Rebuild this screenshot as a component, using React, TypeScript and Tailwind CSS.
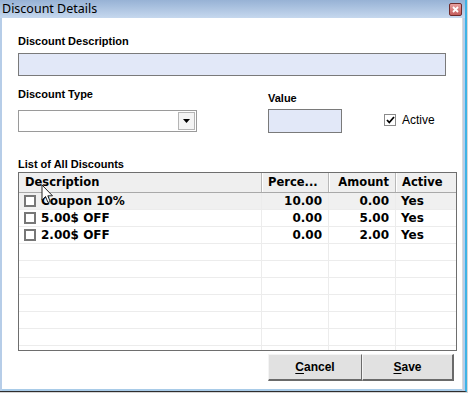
import { useState } from "react";

type DiscountRow = { desc: string; pct: string; amt: string; active: string };

const rows: DiscountRow[] = [
  { desc: "Coupon 10%", pct: "10.00", amt: "0.00", active: "Yes" },
  { desc: "5.00$ OFF", pct: "0.00", amt: "5.00", active: "Yes" },
  { desc: "2.00$ OFF", pct: "0.00", amt: "2.00", active: "Yes" },
];

const EMPTY_ROWS = 7;

const labelCls = "h-[13px] text-[11px] leading-[13px] font-bold text-black font-['Liberation_Sans',Arial,sans-serif]";
const gridFont = "font-['DejaVu_Sans',Verdana,sans-serif] font-bold text-black";

function Cursor() {
  return (
    <svg className="absolute left-[41px] top-[184px]" width="13" height="20" viewBox="0 0 13 20">
      <path d="M1 1 L1 16 L4.5 12.5 L7 18.5 L9.2 17.5 L6.8 11.8 L11.5 11.8 Z" fill="#ffffff" stroke="#222" strokeWidth="1" strokeLinejoin="round" />
    </svg>
  );
}

export default function App() {
  const [active, setActive] = useState(true);

  return (
    <div className="w-[468px] h-[393px] bg-[#d6d6d6] overflow-hidden relative">
      <div className="w-[467px] h-[392px] flex flex-col border-r-2 border-r-[#3db3e6] border-b border-b-[#2e2e2e] bg-[#b6cde8]">
        {/* title bar */}
        <div className="h-[18px] flex items-center justify-between bg-gradient-to-b from-[#97b2d5] to-[#c6d8ee] pl-[2px] pr-[4px]">
          <span className="text-[12.5px] leading-[16px] text-black font-['Noto_Sans','Open_Sans',sans-serif]">Discount Details</span>
          <button className="w-[13px] h-[13px] rounded-[2px] border border-[#6e2a2a] bg-gradient-to-b from-[#e8a0a0] to-[#c45c5c] flex items-center justify-center mr-[-1px]">
            <svg width="7" height="7" viewBox="0 0 7 7">
              <path d="M1 1 L6 6 M6 1 L1 6" stroke="#fff" strokeWidth="1.8" />
            </svg>
          </button>
        </div>

        {/* body */}
        <div className="flex-1 flex flex-col bg-white ml-[2px] mr-[2px] border-r border-r-[#d9d9d9] border-b-2 border-b-[#a8cbe8] pl-[16px] pt-[17px] relative">
          <div className={labelCls}>Discount Description</div>
          <input className="mt-[5px] w-[428px] h-[23px] bg-[#e2e8f8] border border-[#7a7a7a] outline-none" />

          <div className="flex mt-[12px]">
            <div className="w-[179px] flex flex-col">
              <div className={labelCls}>Discount Type</div>
              <div className="mt-[9px] h-[22px] flex border border-[#9a9a9a] bg-white">
                <div className="flex-1" />
                <div className="w-[17px] m-[1px] border border-[#b5b5b5] bg-[#f4f4f4] flex items-center justify-center">
                  <svg width="7" height="4" viewBox="0 0 7 4">
                    <path d="M0 0 H7 L3.5 4 Z" fill="#000" />
                  </svg>
                </div>
              </div>
            </div>
            <div className="ml-[71px] flex flex-col pt-[4px]">
              <div className={labelCls}>Value</div>
              <input className="mt-[4px] w-[74px] h-[24px] bg-[#e2e8f8] border border-[#7a7a7a] outline-none" />
            </div>
            <label className="ml-[42px] mt-[26px] flex items-start gap-[6px] h-[13px] cursor-default">
              <span
                onClick={() => setActive(!active)}
                className="w-[12px] h-[12px] border border-[#8a8a8a] bg-white flex items-center justify-center"
              >
                {active && (
                  <svg width="9" height="8" viewBox="0 0 9 8">
                    <path d="M1 4 L3.3 6.5 L8 1" stroke="#000" strokeWidth="1.8" fill="none" />
                  </svg>
                )}
              </span>
              <span className="text-[12px] leading-[12px] text-black font-['Liberation_Sans',Arial,sans-serif]">Active</span>
            </label>
          </div>

          <div className={`${labelCls} mt-[25px]`}>List of All Discounts</div>

          {/* grid */}
          <div className="mt-[1px] w-[439px] h-[179px] border border-[#6e6e6e] overflow-hidden bg-white">
            <div className={`grid grid-cols-[243px_67px_67px_60px] h-[20px] bg-[#efefef] border-b border-b-[#a9a9a9] text-[11.5px] leading-[19px] ${gridFont}`}>
              <div className="border-r border-r-[#b8b8b8] pl-[6px]">Description</div>
              <div className="border-r border-r-[#b8b8b8] border-l border-l-white pl-[5px] whitespace-nowrap overflow-hidden">Perce...</div>
              <div className="border-r border-r-[#b8b8b8] border-l border-l-white pr-[6px] text-right">Amount</div>
              <div className="border-l border-l-white pl-[5px]">Active</div>
            </div>
            {rows.map((r, i) => (
              <div
                key={r.desc}
                className={`grid grid-cols-[243px_67px_67px_60px] h-[17px] border-b border-b-[#ececec] text-[12px] leading-[16px] ${gridFont} ${i === 0 ? "bg-[#f0f0f0]" : "bg-white"}`}
              >
                <div className="border-r border-r-[#ececec] pl-[5px] flex items-center gap-[5px] whitespace-nowrap">
                  <span className="w-[12px] h-[12px] border-2 border-[#777] bg-white" />
                  <span>{r.desc}</span>
                </div>
                <div className="border-r border-r-[#ececec] pr-[6px] text-right">{r.pct}</div>
                <div className="border-r border-r-[#ececec] pr-[6px] text-right">{r.amt}</div>
                <div className="pl-[5px]">{r.active}</div>
              </div>
            ))}
            {Array.from({ length: EMPTY_ROWS }).map((_, i) => (
              <div key={i} className="grid grid-cols-[243px_67px_67px_60px] h-[17px] border-b border-b-[#ececec]">
                <div className="border-r border-r-[#ececec]" />
                <div className="border-r border-r-[#ececec]" />
                <div className="border-r border-r-[#ececec]" />
                <div />
              </div>
            ))}
          </div>

          {/* buttons */}
          <div className="flex ml-[250px] mt-[3px] font-['Liberation_Sans',Arial,sans-serif] text-[12px] font-bold text-black">
            <button className="w-[94px] h-[27px] bg-[#e1e1e1] border border-t-[#f4f4f4] border-l-[#f4f4f4] border-r-[#6a6a6a] border-b-[#6a6a6a] border-b-2">
              <span className="underline underline-offset-2">C</span>ancel
            </button>
            <button className="w-[92px] h-[27px] bg-[#e1e1e1] border border-t-[#f4f4f4] border-l-[#f4f4f4] border-r-[#6a6a6a] border-b-[#6a6a6a] border-b-2 border-r-2">
              <span className="underline underline-offset-2">S</span>ave
            </button>
          </div>
        </div>
      </div>
      <Cursor />
    </div>
  );
}
